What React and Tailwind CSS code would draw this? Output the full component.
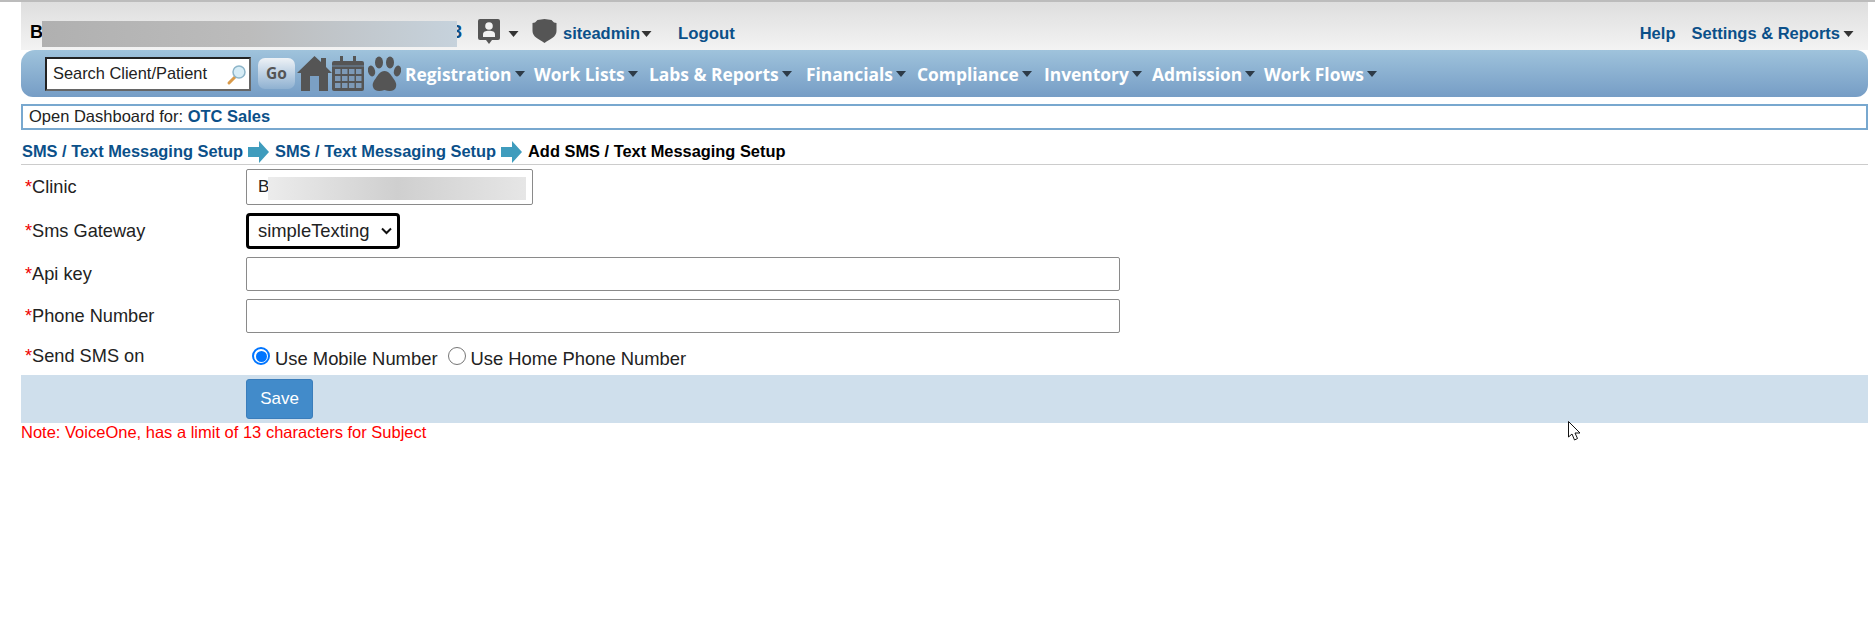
const Caret = ({ c = "#333", w = 11, h = 6, className = "" }) => (
  <svg width={w} height={h} viewBox="0 0 10 6" className={className}><path d="M0 0H10L5 6Z" fill={c} /></svg>
);

const BreadArrow = () => (
  <svg width="21" height="22" viewBox="0 0 21 22" className="ml-[5px] mr-[6px] mt-[1px] shrink-0">
    <path d="M0 6H11V0L21 11L11 22V16H0Z" fill="#3f9cbd" />
  </svg>
);

const NavItem = ({ label, w }) => (
  <div className="flex items-center pt-[1px]" style={{ width: w }}>
    <span className="text-white">{label}</span>
    <Caret c="#2d3b48" w={10} h={6} className="ml-[3px] mt-[1px]" />
  </div>
);

const Req = ({ children }) => (
  <label className="w-[225px] shrink-0 pl-[4px] pt-[1px] text-[18.200px] text-[#222]">
    <span className="text-[#e00]">*</span>{children}
  </label>
);

export default function App() {
  return (
    <div className="relative h-[633px] w-full overflow-hidden bg-white font-['Liberation_Sans',Arial,sans-serif]">
      <div className="h-[2px] bg-[#bcbcbc]" />
      <div className="ml-[21px] mr-[7px]">
        <header className="relative flex h-[48px] items-center bg-gradient-to-b from-[#dedede] to-[#f3f3f3] pt-[15px] text-[#0b5089]">
          <b className="ml-[9px] mb-[3px] w-[432px] text-[18px] text-black">B<span className="ml-[409px] text-[#0b5089]">3</span></b>
          <div className="absolute left-[21px] top-[19px] h-[26px] w-[415px] bg-gradient-to-r from-[#b0b0b0] via-[#bcbcbc] to-[#c6d2dc]" />
          <svg width="22" height="25" viewBox="0 0 22 25" className="ml-[16px] mb-[5px]">
            <path d="M2 0H20a2 2 0 0 1 2 2V19a2 2 0 0 1-2 2H14L11 25L8 21H2a2 2 0 0 1-2-2V2a2 2 0 0 1 2-2Z" fill="#555" />
            <circle cx="11" cy="7" r="3.800" fill="#f1f1f1" />
            <path d="M5 18V15.500c0-3 2.500-3.800 6-3.800s6 .8 6 3.800V18Z" fill="#f1f1f1" />
          </svg>
          <Caret c="#333" w={11} h={6} className="ml-[8px]" />
          <svg width="25" height="24" viewBox="0 0 25 24" className="ml-[13px] mb-[5px]">
            <path d="M5.500 1L12.500 0L19.500 1L22 3.500L24.500 4V12C24.500 18 18 20 12.500 24C7 20 .5 18 .5 12V4L3 3.500Z" fill="#555" />
          </svg>
          <span className="ml-[6px] text-[16.500px] font-bold">siteadmin</span>
          <Caret c="#333" w={11} h={6} className="ml-[1px]" />
          <span className="ml-[26px] text-[16.800px] font-bold">Logout</span>
          <span className="ml-auto text-[16.500px] font-bold">Help</span>
          <span className="ml-[16px] text-[16.500px] font-bold">Settings &amp; Reports</span>
          <Caret c="#333" w={11} h={6} className="ml-[3px] mr-[14px]" />
        </header>

        <nav className="flex h-[47px] items-center rounded-tl-[14px] rounded-r-[12px] rounded-bl-[12px] bg-gradient-to-b from-[#9fc3dc] to-[#769dc5] pl-[24px] font-['Open_Sans',sans-serif] text-[17.400px] font-bold">
          <div className="relative flex h-[34px] w-[206px] items-center border-2 border-t-[#222] border-l-[#222] border-r-[#666] border-b-[#666] bg-white pl-[6px] font-['Liberation_Sans',sans-serif] text-[16.400px] font-normal text-[#222]">
            Search Client/Patient
            <svg width="22" height="22" viewBox="0 0 22 22" className="absolute right-[1px] top-[5px]">
              <path d="M9 13L3 19" stroke="#d99a4a" strokeWidth="3" strokeLinecap="round" />
              <circle cx="13" cy="8" r="6" fill="#d6ecf6" stroke="#8db5c9" strokeWidth="1.500" />
            </svg>
          </div>
          <div className="ml-[7px] flex h-[31px] w-[37px] items-center justify-center rounded-[7px] bg-gradient-to-b from-[#eef2f6] to-[#8fb1d1] text-[15.500px] font-bold text-[#555]">Go</div>
          <svg width="35" height="35" viewBox="0 0 35 35" className="ml-[2px]">
            <path d="M0 17L17.500 0L24 6V2H29V11L35 17H31V35H4V17Z" fill="#555" />
            <rect x="13" y="20" width="9" height="15" fill="#7ba0c4" />
          </svg>
          <svg width="32" height="35" viewBox="0 0 32 35" className="shrink-0">
            <path d="M8 0h3v5H21V0h3V5h6a2 2 0 0 1 2 2V33a2 2 0 0 1-2 2H2a2 2 0 0 1-2-2V7A2 2 0 0 1 2 5H8Z" fill="#555" />
            <path d="M0 10h32" stroke="#6f8aa5" strokeWidth="1" />
            <path d="M3 13h5.500v5H3ZM10 13h5.500v5H10ZM17 13h5.500v5H17ZM24 13h5.500v5H24ZM3 20h5.500v5H3ZM10 20h5.500v5H10ZM17 20h5.500v5H17ZM24 20h5.500v5H24ZM3 27h5.500v5H3ZM10 27h5.500v5H10ZM17 27h5.500v5H17ZM24 27h5.500v5H24Z" fill="#7d99b6" />
          </svg>
          <svg width="33" height="36" viewBox="0 0 33 36" className="ml-[4px] mr-[4px] shrink-0">
            <ellipse cx="11" cy="6.500" rx="4" ry="6" fill="#555" />
            <ellipse cx="22" cy="6.500" rx="4" ry="6" fill="#555" />
            <ellipse cx="3.500" cy="15" rx="3.500" ry="5.500" fill="#555" transform="rotate(-15 3.500 15)" />
            <ellipse cx="29.500" cy="15" rx="3.500" ry="5.500" fill="#555" transform="rotate(15 29.500 15)" />
            <path d="M16.500 15C21 15 23 19 25 22C27 25 29 27 28 31C27 35 22 36 16.500 34C11 36 6 35 5 31C4 27 6 25 8 22C10 19 12 15 16.500 15Z" fill="#555" />
          </svg>
          <NavItem label="Registration" w={129} />
          <NavItem label="Work Lists" w={115} />
          <NavItem label="Labs & Reports" w={157} />
          <NavItem label="Financials" w={111} />
          <NavItem label="Compliance" w={127} />
          <NavItem label="Inventory" w={108} />
          <NavItem label="Admission" w={112} />
          <NavItem label="Work Flows" w={120} />
        </nav>

        <div className="mt-[7px] flex h-[26px] items-center border-2 border-[#78a8cf] pb-[1px] pl-[6px] text-[16.500px] text-[#222]">
          Open Dashboard for:&nbsp;<b className="text-[#0b5089]">OTC Sales</b>
        </div>

        <div className="mt-[8px] flex h-[27px] items-center border-b border-[#ccc] text-[16.400px] font-bold text-[#0b5089]">
          <span className="ml-[1px]">SMS / Text Messaging Setup</span>
          <BreadArrow />
          <span>SMS / Text Messaging Setup</span>
          <BreadArrow />
          <span className="text-black">Add SMS / Text Messaging Setup</span>
        </div>

        <form className="flex flex-col">
          <div className="mt-[4px] flex h-[36px] items-center">
            <Req>Clinic</Req>
            <div className="relative flex h-full w-[287px] items-center rounded-[2px] border border-[#8a8a8a] pl-[11px] text-[17px] text-[#222]">
              B
              <div className="absolute left-[21px] top-[7px] h-[23px] w-[258px] bg-gradient-to-r from-[#ececec] via-[#cfcfcf] to-[#e6e6e6]" />
            </div>
          </div>
          <div className="mt-[8px] flex h-[36px] items-center">
            <Req>Sms Gateway</Req>
            <div className="flex h-full w-[154px] items-center justify-between rounded-[4px] border-[3px] border-black pl-[9px] pr-[4px] text-[18.400px] text-[#222]">
              simpleTexting
              <svg width="13" height="8" viewBox="0 0 12 8"><path d="M1.500 1.500L6 6L10.500 1.500" fill="none" stroke="#111" strokeWidth="2" /></svg>
            </div>
          </div>
          <div className="mt-[8px] flex h-[34px] items-center">
            <Req>Api key</Req>
            <div className="h-full w-[874px] rounded-[2px] border border-[#8a8a8a]" />
          </div>
          <div className="mt-[8px] flex h-[34px] items-center">
            <Req>Phone Number</Req>
            <div className="h-full w-[874px] rounded-[2px] border border-[#8a8a8a]" />
          </div>
          <div className="mt-[6px] flex h-[35px] items-center">
            <label className="w-[225px] shrink-0 pl-[4px] text-[18.200px] text-[#222]"><span className="text-[#e00]">*</span>Send SMS on</label>
            <div className="ml-[6px] mt-[5px] flex items-center text-[18.400px] text-[#222]">
              <span className="mb-[5px] flex h-[18px] w-[18px] items-center justify-center rounded-full border-2 border-[#0075ff]"><span className="h-[11px] w-[11px] rounded-full bg-[#0075ff]" /></span>
              <span className="ml-[5px]">Use Mobile Number</span>
              <span className="mb-[5px] ml-[10px] h-[18px] w-[18px] rounded-full border border-[#767676]" />
              <span className="ml-[5px]">Use Home Phone Number</span>
            </div>
          </div>
          <div className="mt-[1px] flex h-[48px] items-center bg-[#cfdfec] pl-[225px]">
            <div className="flex h-[40px] w-[67px] items-center justify-center rounded-[3px] border border-[#3a7dbb] bg-[#428bca] text-[17px] text-white">Save</div>
          </div>
        </form>
        <div className="text-[16.500px] leading-[18px] text-[#f00]">Note: VoiceOne, has a limit of 13 characters for Subject</div>
      </div>

      <svg width="13" height="20" viewBox="0 0 13 20" className="absolute left-[1568px] top-[421px]">
        <path d="M.5 .5V16L4 13L6.500 19L9.500 17.500L7 12H12Z" fill="#fff" stroke="#111" strokeWidth="1" />
      </svg>
    </div>
  );
}
